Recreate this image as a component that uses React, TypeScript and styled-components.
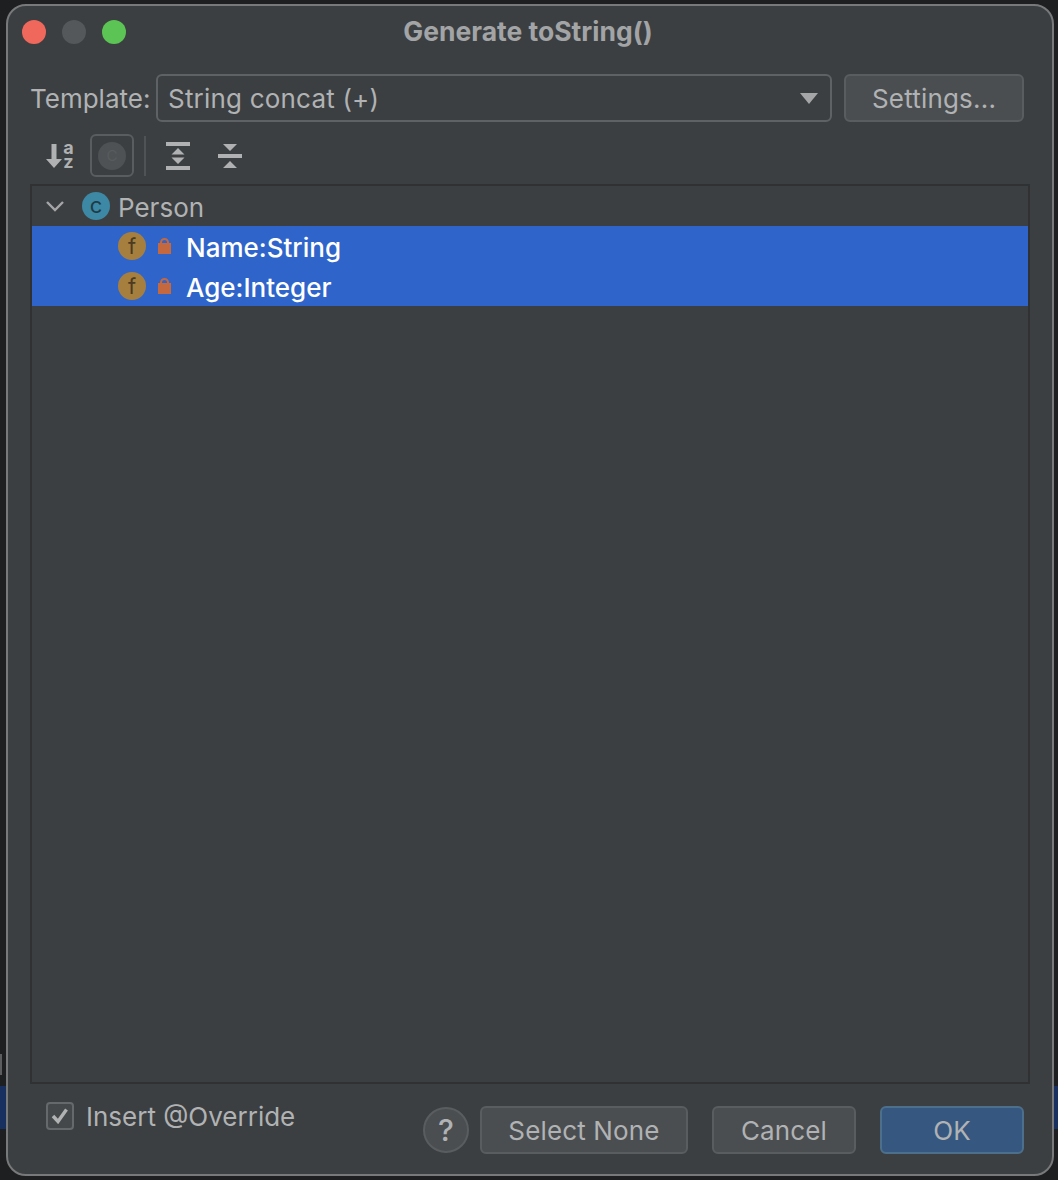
import React from 'react'
import styled, { createGlobalStyle } from 'styled-components'

const GlobalStyle = createGlobalStyle`
  html, body {
    margin: 0;
    padding: 0;
    background: #1e1f20;
  }
  * {
    box-sizing: border-box;
  }
`

export default function App() {
  return (
    <Desktop>
      <GlobalStyle />
      <BackdropMark />
      <BackdropStrip side="left" />
      <BackdropStrip side="right" />
      <Dialog>
        <TitleBar>
          <Lights>
            <Light color="#f0685c" />
            <Light color="#54585a" />
            <Light color="#5cc454" />
          </Lights>
          <Title>Generate toString()</Title>
        </TitleBar>

        <TemplateRow>
          <FieldLabel>Template:</FieldLabel>
          <Combo>
            <span>String concat (+)</span>
            <svg width="18" height="11" viewBox="0 0 18 11">
              <path d="M0 0h18L9 11z" fill="#a4a6a8" />
            </svg>
          </Combo>
          <SettingsButton>Settings...</SettingsButton>
        </TemplateRow>

        <Toolbar>
          <SortIcon>
            <svg width="16" height="24" viewBox="0 0 16 24">
              <path d="M5.5 0h5v15H16l-8 9-8-9h5.5z" fill="#afb1b3" />
            </svg>
            <SortLetters>
              <span>a</span>
              <span>z</span>
            </SortLetters>
          </SortIcon>
          <ToggleBox>
            <DimBadge>C</DimBadge>
          </ToggleBox>
          <ToolSeparator />
          <ToolIcon after={28}>
            <svg width="24" height="28" viewBox="0 0 24 28">
              <path d="M0 0h24v4H0zM0 28h24v-4H0z" fill="#afb1b3" />
              <path d="M12 6l6.5 6.5h-13zM12 22l6.5-6.5h-13z" fill="#afb1b3" />
            </svg>
          </ToolIcon>
          <ToolIcon>
            <svg width="24" height="28" viewBox="0 0 24 28">
              <path d="M0 12h24v4H0z" fill="#afb1b3" />
              <path d="M5 2h14l-7 7zM5 26h14l-7-7z" fill="#afb1b3" />
            </svg>
          </ToolIcon>
        </Toolbar>

        <TreePanel>
          <ClassRow>
            <svg width="18" height="11" viewBox="0 0 18 11">
              <path d="M1 1l8 8 8-8" fill="none" stroke="#a4a6a8" strokeWidth="2.4" />
            </svg>
            <ClassBadge>c</ClassBadge>
            <ClassName>Person</ClassName>
          </ClassRow>
          <FieldRow>
            <FieldBadge>f</FieldBadge>
            <LockIcon />
            <FieldName>Name:String</FieldName>
          </FieldRow>
          <FieldRow>
            <FieldBadge>f</FieldBadge>
            <LockIcon />
            <FieldName>Age:Integer</FieldName>
          </FieldRow>
        </TreePanel>

        <Footer>
          <CheckLabel>
            <CheckBox>
              <svg width="18" height="16" viewBox="0 0 18 16">
                <path d="M2 8l5 5.5L15.5 1.5" fill="none" stroke="#b0b2b4" strokeWidth="3.4" />
              </svg>
            </CheckBox>
            Insert @Override
          </CheckLabel>
          <FooterButtons>
            <HelpButton>?</HelpButton>
            <ActionButton width={208}>Select None</ActionButton>
            <ActionButton width={144} gap={24}>Cancel</ActionButton>
            <ActionButton width={144} gap={24} primary>OK</ActionButton>
          </FooterButtons>
        </Footer>
      </Dialog>
    </Desktop>
  )
}

const LockIcon = () => (
  <LockWrap>
    <svg width="13" height="16" viewBox="0 0 13 16">
      <path d="M3 6V4.5a3.5 3.5 0 0 1 7 0V6" fill="none" stroke="#c4683f" strokeWidth="2" />
      <rect x="0" y="5" width="13" height="11" fill="#c4683f" />
    </svg>
  </LockWrap>
)

const Desktop = styled.div`
  position: relative;
  width: 1058px;
  height: 1180px;
  padding: 4px 4px 4px 6px;
  background: #1e1f20;
  overflow: hidden;
`

const BackdropStrip = styled.div<{ side: 'left' | 'right' }>`
  position: absolute;
  top: 1086px;
  ${(p) => (p.side === 'left' ? 'left: 0;' : 'right: 0;')}
  width: 8px;
  height: 43px;
  background: #17305f;
`

const BackdropMark = styled.div`
  position: absolute;
  top: 1054px;
  left: 0;
  width: 2px;
  height: 21px;
  background: #5c5d5e;
`

const Dialog = styled.div`
  position: relative;
  display: flex;
  flex-direction: column;
  height: 100%;
  padding: 0 22px;
  background: #3c3f41;
  border: 2px solid #77797b;
  border-radius: 20px;
  font-family: Inter, 'Liberation Sans', sans-serif;
  font-size: 26px;
  color: #b0b2b4;
`

const TitleBar = styled.div`
  position: relative;
  display: flex;
  align-items: center;
  justify-content: center;
  height: 50px;
  margin: 0 -22px;
  padding-right: 4px;
`

const Lights = styled.div`
  position: absolute;
  left: 14px;
  top: 14px;
  display: flex;
  gap: 16px;
`

const Light = styled.span<{ color: string }>`
  width: 24px;
  height: 24px;
  border-radius: 50%;
  background: ${(p) => p.color};
`

const Title = styled.div`
  font-size: 26.5px;
  font-weight: 700;
  color: #a2a4a6;
`

const TemplateRow = styled.div`
  display: flex;
  align-items: center;
  height: 48px;
  margin-top: 18px;
`

const FieldLabel = styled.label`
  width: 126px;
  white-space: nowrap;
`

const Combo = styled.div`
  display: flex;
  align-items: center;
  justify-content: space-between;
  width: 676px;
  height: 48px;
  padding: 0 12px 0 10px;
  border: 2px solid #5f6264;
  border-radius: 6px;
  letter-spacing: 0.2px;
`

const SettingsButton = styled.div`
  display: flex;
  align-items: center;
  justify-content: center;
  width: 180px;
  height: 48px;
  margin-left: 12px;
  background: #4b4e50;
  border: 2px solid #5a5d5f;
  border-radius: 6px;
  letter-spacing: 0.2px;
`

const Toolbar = styled.div`
  display: flex;
  align-items: center;
  height: 43px;
  margin-top: 12px;
  padding-left: 16px;
`

const SortIcon = styled.div`
  display: flex;
  align-items: center;
  justify-content: space-between;
  width: 28px;
  margin-right: 16px;
`

const SortLetters = styled.div`
  display: flex;
  flex-direction: column;
  align-items: center;
  width: 11px;
  color: #afb1b3;
  font-size: 18px;
  font-weight: 700;

  span {
    height: 14px;
    line-height: 12px;
  }
`

const ToolIcon = styled.div<{ after?: number }>`
  display: flex;
  align-items: center;
  margin-right: ${(p) => p.after ?? 0}px;
`

const ToggleBox = styled.div`
  display: flex;
  align-items: center;
  justify-content: center;
  width: 44px;
  height: 43px;
  border: 2px solid #5a5d5f;
  border-radius: 6px;
`

const DimBadge = styled.div`
  display: flex;
  align-items: center;
  justify-content: center;
  width: 28px;
  height: 28px;
  border-radius: 50%;
  background: #4f5254;
  color: #585b5d;
  font-size: 15px;
`

const ToolSeparator = styled.div`
  width: 2px;
  height: 40px;
  margin: 0 20px 0 10px;
  background: #505355;
`

const TreePanel = styled.div`
  flex: 1;
  margin-top: 7px;
  background: #3c3f41;
  border: 2px solid #2f3132;
`

const ClassRow = styled.div`
  display: flex;
  align-items: center;
  height: 40px;
  padding-left: 14px;
`

const ClassBadge = styled.div`
  display: flex;
  align-items: center;
  justify-content: center;
  width: 28px;
  height: 28px;
  margin-left: 18px;
  padding-bottom: 2px;
  border-radius: 50%;
  background: #3d88a4;
  color: #1f3b46;
  font-size: 22px;
  line-height: 24px;
`

const ClassName = styled.span`
  margin-left: 8px;
  padding-top: 2px;
`

const FieldRow = styled.div`
  display: flex;
  align-items: center;
  height: 40px;
  padding-left: 86px;
  background: #2f65ca;
`

const FieldBadge = styled.div`
  display: flex;
  align-items: center;
  justify-content: center;
  width: 28px;
  height: 28px;
  border-radius: 50%;
  background: #a67f3f;
  color: #4a3b22;
  font-size: 22px;
`

const LockWrap = styled.span`
  display: flex;
  margin-left: 12px;
`

const FieldName = styled.span`
  margin-left: 15px;
  padding-top: 2px;
  color: #ffffff;
  font-weight: 500;
`

const Footer = styled.div`
  display: flex;
  justify-content: space-between;
  height: 90px;
  padding: 18px 6px 0 16px;
`

const CheckLabel = styled.label`
  display: flex;
  align-items: flex-start;
  height: 28px;
  gap: 12px;
  line-height: 30px;
`

const CheckBox = styled.span`
  display: flex;
  align-items: center;
  justify-content: center;
  width: 28px;
  height: 28px;
  background: #45484a;
  border: 2px solid #66696b;
  border-radius: 4px;
`

const FooterButtons = styled.div`
  display: flex;
  align-items: flex-start;
  margin-top: 4px;
  letter-spacing: 0.15px;
`

const HelpButton = styled.div`
  display: flex;
  align-items: center;
  justify-content: center;
  width: 46px;
  height: 46px;
  margin: 1px 11px 0 0;
  background: #4b4e50;
  border: 2px solid #5a5d5f;
  border-radius: 50%;
  font-size: 30px;
  font-weight: 500;
`

const ActionButton = styled.div<{ width: number; gap?: number; primary?: boolean }>`
  display: flex;
  align-items: center;
  justify-content: center;
  width: ${(p) => p.width}px;
  height: 48px;
  margin-left: ${(p) => p.gap ?? 0}px;
  background: ${(p) => (p.primary ? '#365880' : '#4b4e50')};
  border: 2px solid ${(p) => (p.primary ? '#4c708c' : '#5a5d5f')};
  border-radius: 6px;
`
